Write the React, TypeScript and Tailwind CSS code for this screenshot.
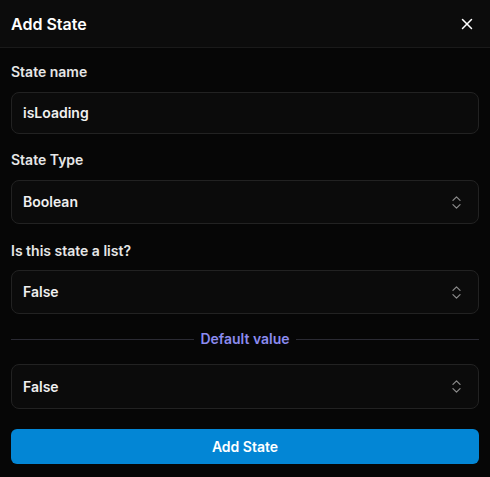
import { X, ChevronsUpDown } from "lucide-react";

function SelectBox({ value, tall }: { value: string; tall?: boolean }) {
  return (
    <div
      className={
        tall
          ? "flex h-[45px] items-center justify-between rounded-lg border border-[#222222] bg-[#0b0b0b] pl-[11px] pr-[13px]"
          : "flex h-[44px] items-center justify-between rounded-lg border border-[#222222] bg-[#0b0b0b] pl-[11px] pr-[13px]"
      }
    >
      <span className="text-[14px] leading-[20px] font-semibold text-[#f0f0f0]">{value}</span>
      <ChevronsUpDown size={17} strokeWidth={1.75} className="text-[#8a8a8a]" />
    </div>
  );
}

function Label({ children }: { children: string }) {
  return <div className="text-[14px] leading-[20px] font-semibold text-[#e6e6e6]">{children}</div>;
}

export default function App() {
  return (
    <div
      className="flex h-[477px] w-[490px] flex-col bg-[#060606]"
      style={{ fontFamily: "Inter, 'Noto Sans', sans-serif" }}
    >
      <div className="flex h-[48px] shrink-0 items-center justify-between border-b border-[#1a1a1a] bg-[#0c0c0c] pl-[11px] pr-[14px]">
        <span className="text-[16px] font-semibold text-white">Add State</span>
        <X size={18} strokeWidth={2} className="text-white" />
      </div>

      <div className="flex flex-col px-[11px]">
        <div className="mt-[14px]">
          <Label>State name</Label>
        </div>
        <div className="mt-[10px] flex h-[42px] items-center rounded-lg border border-[#222222] bg-[#0b0b0b] px-[11px]">
          <span className="text-[14px] leading-[20px] font-semibold text-[#f0f0f0]">isLoading</span>
        </div>

        <div className="mt-[16px]">
          <Label>State Type</Label>
        </div>
        <div className="mt-[10px]">
          <SelectBox value="Boolean" />
        </div>

        <div className="mt-[17px]">
          <Label>Is this state a list?</Label>
        </div>
        <div className="mt-[9px]">
          <SelectBox value="False" />
        </div>

        <div className="mt-[15px] flex items-center gap-[6px]">
          <div className="h-px flex-1 bg-[#2a2a33]" />
          <span className="text-[14px] leading-[20px] font-semibold text-[#8b8bef]">Default value</span>
          <div className="h-px flex-1 bg-[#2a2a33]" />
        </div>

        <div className="mt-[15px]">
          <SelectBox value="False" tall />
        </div>

        <button className="mt-[20px] flex h-[35px] items-center justify-center rounded-md bg-[#0386d5] text-[14px] font-semibold text-white">
          Add State
        </button>
      </div>
    </div>
  );
}
